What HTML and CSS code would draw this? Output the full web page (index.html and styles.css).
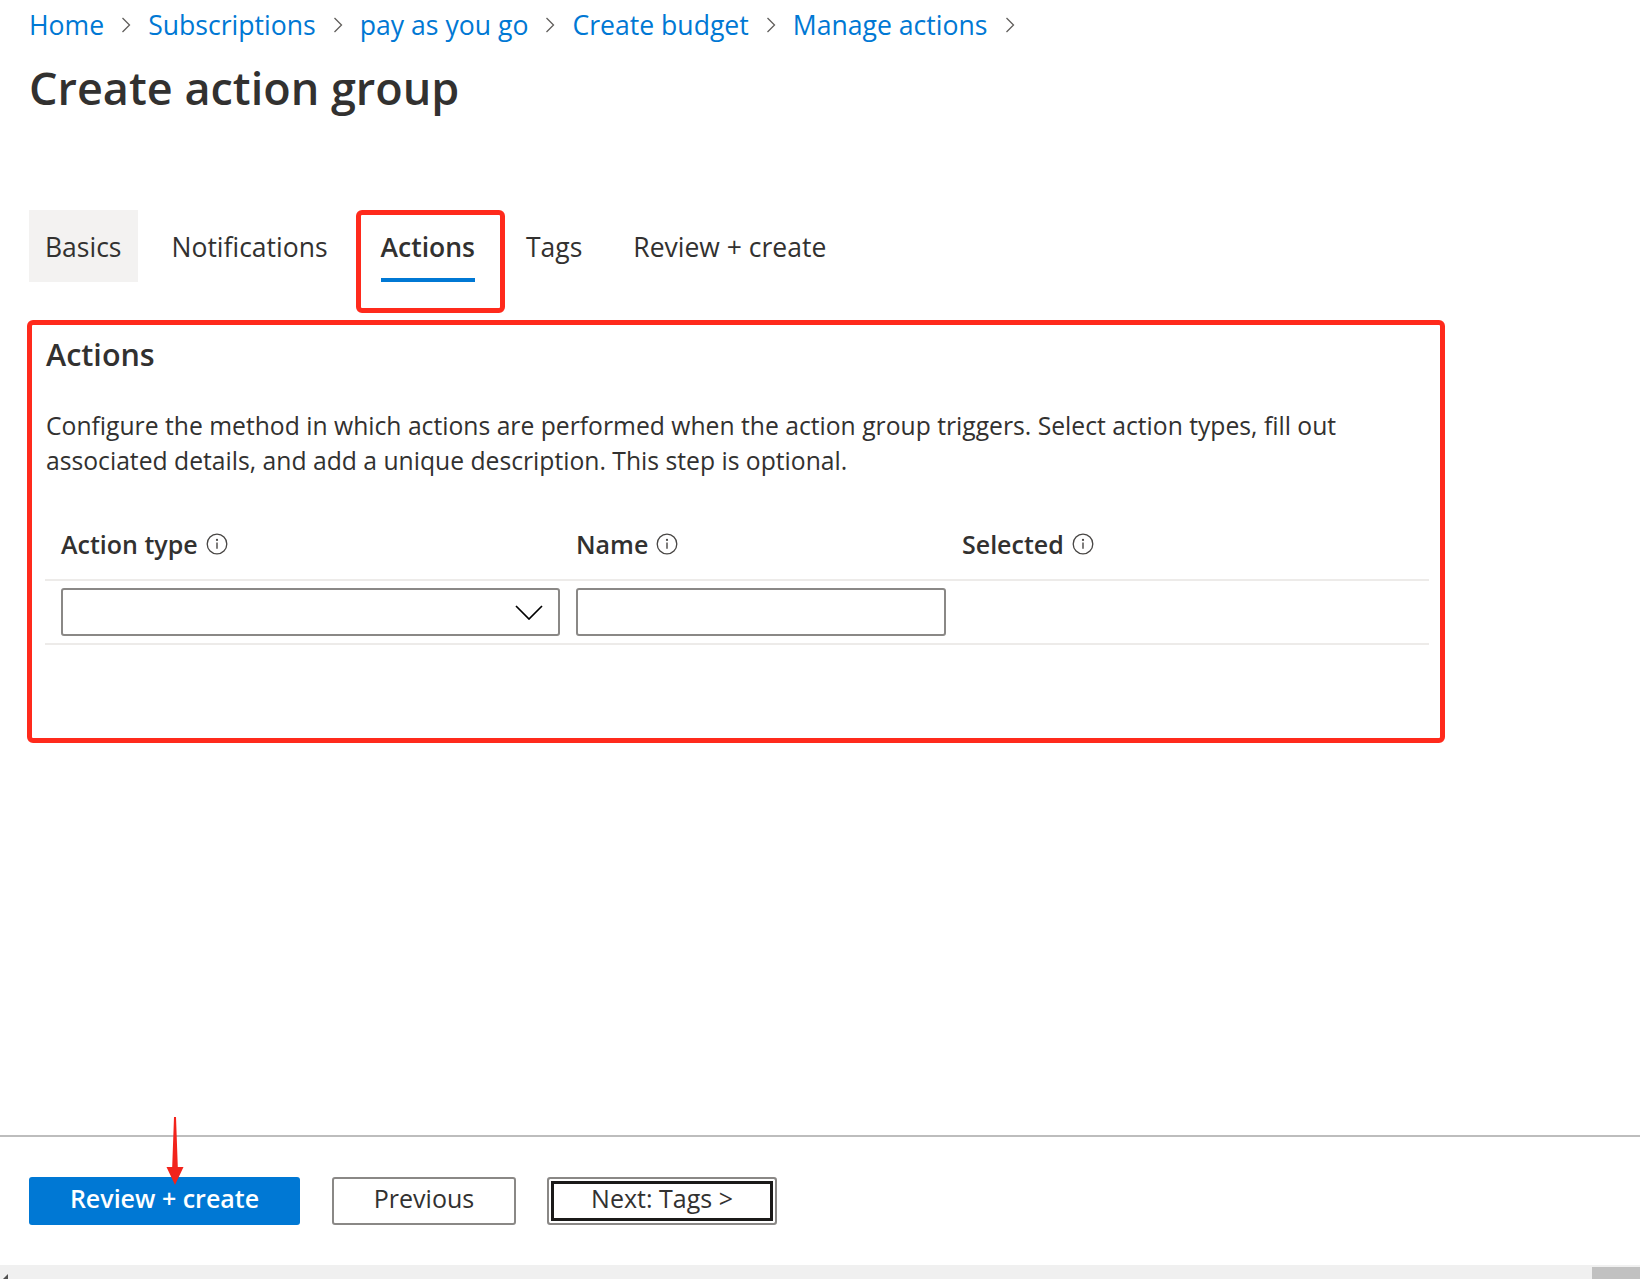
FILE: index.html
```html
<!DOCTYPE html>
<html lang="en">
<head>
<meta charset="utf-8">
<title>Create action group</title>
<link rel="stylesheet" href="styles.css">
</head>
<body>
<div class="app">
  <main class="main">
    <nav class="crumbs">
      <a class="crumb">Home</a>
      <svg class="chev" width="10" height="16" viewBox="0 0 10 16"><path d="M1.5 1 L8.5 8 L1.5 15" /></svg>
      <a class="crumb">Subscriptions</a>
      <svg class="chev" width="10" height="16" viewBox="0 0 10 16"><path d="M1.5 1 L8.5 8 L1.5 15" /></svg>
      <a class="crumb">pay as you go</a>
      <svg class="chev" width="10" height="16" viewBox="0 0 10 16"><path d="M1.5 1 L8.5 8 L1.5 15" /></svg>
      <a class="crumb">Create budget</a>
      <svg class="chev" width="10" height="16" viewBox="0 0 10 16"><path d="M1.5 1 L8.5 8 L1.5 15" /></svg>
      <a class="crumb">Manage actions</a>
      <svg class="chev" width="10" height="16" viewBox="0 0 10 16"><path d="M1.5 1 L8.5 8 L1.5 15" /></svg>
    </nav>
    <h1 class="title">Create action group</h1>
    <div class="tabs">
      <div class="tab tab-basics">Basics</div>
      <div class="tab">Notifications</div>
      <div class="tab tab-active">Actions<span class="tab-mark"></span><span class="tab-annot"></span></div>
      <div class="tab">Tags</div>
      <div class="tab">Review + create</div>
    </div>
    <section class="panel">
      <h2 class="panel-title">Actions</h2>
      <p class="panel-desc">Configure the method in which actions are performed when the action group triggers. Select action types, fill out associated details, and add a unique description. This step is optional.</p>
      <div class="grid">
        <div class="row row-head">
          <div class="cell c1">Action type <svg class="info" width="22" height="22" viewBox="0 0 22 22"><circle cx="11" cy="11" r="9.8" /><circle class="dot" cx="11" cy="6.9" r="1.1" /><path d="M11 9.6 V15.8" /></svg></div>
          <div class="cell c2">Name <svg class="info" width="22" height="22" viewBox="0 0 22 22"><circle cx="11" cy="11" r="9.8" /><circle class="dot" cx="11" cy="6.9" r="1.1" /><path d="M11 9.6 V15.8" /></svg></div>
          <div class="cell c3">Selected <svg class="info" width="22" height="22" viewBox="0 0 22 22"><circle cx="11" cy="11" r="9.8" /><circle class="dot" cx="11" cy="6.9" r="1.1" /><path d="M11 9.6 V15.8" /></svg></div>
        </div>
        <div class="row row-body">
          <div class="cell c1">
            <div class="select">
              <svg class="select-chev" width="28" height="15" viewBox="0 0 28 15"><path d="M1 1 L14 14 L27 1" /></svg>
            </div>
          </div>
          <div class="cell c2"><div class="textbox"></div></div>
          <div class="cell c3"></div>
        </div>
      </div>
    </section>
  </main>
  <footer class="footer">
    <button class="btn btn-primary">Review + create</button>
    <button class="btn btn-default btn-prev">Previous</button>
    <button class="btn btn-default btn-focus">Next: Tags &gt;</button>
    <svg class="annot-arrow" width="20" height="70" viewBox="0 0 20 70"><polygon points="9,0 11,0 12.8,50 18.5,50 10,68 1.5,50 7.2,50" /></svg>
  </footer>
  <div class="hscroll"><span class="hscroll-left"></span><span class="hscroll-thumb"></span></div>
</div>
</body>
</html>
```

FILE: styles.css
```css
* { box-sizing: border-box; }
html, body { margin: 0; padding: 0; }
body {
  font-family: "Open Sans", "Noto Sans", "Liberation Sans", sans-serif;
  color: #323130;
  background: #fff;
}
.app {
  height: 100vh;
  display: flex;
  flex-direction: column;
  overflow: hidden;
}
.main {
  flex: 1;
  min-height: 0;
  position: relative;
}
.crumbs {
  display: flex;
  align-items: center;
  height: 46px;
  padding: 4px 0 0 29px;
  gap: 17px;
}
.crumb {
  color: #0078d4;
  font-size: 26.6px;
  line-height: 42px;
  white-space: nowrap;
}
.chev { flex: none; }
.chev path { fill: none; stroke: #605e5c; stroke-width: 1.3; }

.title {
  margin: 12px 0 0 29px;
  font-size: 45px;
  line-height: 60px;
  font-weight: 600;
  color: #323130;
}

.tabs {
  display: flex;
  margin: 92px 0 0 29px;
  height: 72px;
  gap: 17px;
}
.tab {
  position: relative;
  height: 72px;
  padding: 3px 17px 0;
  font-size: 26.5px;
  line-height: 69px;
  color: #323130;
  white-space: nowrap;
}
.tab-basics { background: #f3f2f1; padding: 3px 16px 0; }
.tab-active { font-weight: 600; margin-left: 2px; }
.tab-mark {
  position: absolute;
  left: 17px;
  right: 17px;
  bottom: 0;
  height: 4px;
  background: #0078d4;
}
.tab-annot {
  position: absolute;
  left: -8px;
  right: -13px;
  top: 0;
  height: 103px;
  border: 5px solid #ff2a1c;
  border-radius: 6px;
}

.panel {
  margin: 38px 0 0 27px;
  width: 1418px;
  height: 423px;
  border: 5px solid #ff2a1c;
  border-radius: 6px;
  padding: 7px 11px 0 13px;
}
.panel-title {
  margin: 0 0 0 1px;
  font-size: 30.5px;
  line-height: 44px;
  font-weight: 600;
}
.panel-desc {
  margin: 32px 0 0 1px;
  font-size: 24.7px;
  line-height: 35px;
}
.grid { margin-top: 48px; }
.row { display: flex; }
.row-head {
  padding-bottom: 17px;
  font-size: 25px;
  line-height: 36px;
  font-weight: 600;
}
.row-body {
  border-top: 2px solid #edebe9;
  border-bottom: 2px solid #edebe9;
  padding: 7px 0;
}
.cell {
  padding-left: 16px;
  display: flex;
  align-items: center;
  gap: 8px;
  white-space: nowrap;
}
.c1 { width: 515px; }
.c2 { width: 386px; }
.c3 { flex: 1; }
.info { flex: none; }
.info circle { fill: none; stroke: #484644; stroke-width: 1.3; }
.info circle.dot { fill: #484644; stroke: none; }
.info path { stroke: #484644; stroke-width: 1.4; }

.select, .textbox {
  height: 48px;
  border: 2px solid #8a8886;
  border-radius: 3px;
  background: #fff;
}
.select {
  width: 499px;
  display: flex;
  align-items: center;
  justify-content: flex-end;
  padding-right: 15px;
}
.select-chev path { fill: none; stroke: #000; stroke-width: 1.7; }
.textbox { width: 370px; }

.footer {
  position: relative;
  flex: none;
  height: 130px;
  border-top: 2px solid #bdbdbd;
  padding: 40px 0 0 29px;
  display: flex;
  align-items: flex-start;
  gap: 31px;
}
.btn {
  height: 48px;
  font-family: inherit;
  font-size: 25px;
  border-radius: 3px;
  padding: 0 0 6px;
  cursor: pointer;
}
.btn-primary {
  width: 271px;
  background: #0078d4;
  border: none;
  color: #fff;
  font-weight: 600;
}
.btn-default {
  background: #fff;
  border: 2px solid #8a8886;
  color: #323130;
}
.btn-prev { width: 184px; margin-left: 1px; }
.btn-focus {
  width: 230px;
  box-shadow: inset 0 0 0 2px #fff, inset 0 0 0 5px #1b1a19;
}
.annot-arrow {
  position: absolute;
  left: 165px;
  top: -20px;
}
.annot-arrow polygon { fill: #f2231b; }

.hscroll {
  flex: none;
  height: 14px;
  background: #f0f0f0;
  position: relative;
}
.hscroll-thumb {
  position: absolute;
  right: 0;
  top: 2px;
  bottom: 0;
  width: 48px;
  background: #c1c1c1;
}
.hscroll-left {
  position: absolute;
  left: 3px;
  bottom: 0;
  width: 0;
  height: 0;
  border-top: 5px solid transparent;
  border-right: 5px solid #505050;
}
```
